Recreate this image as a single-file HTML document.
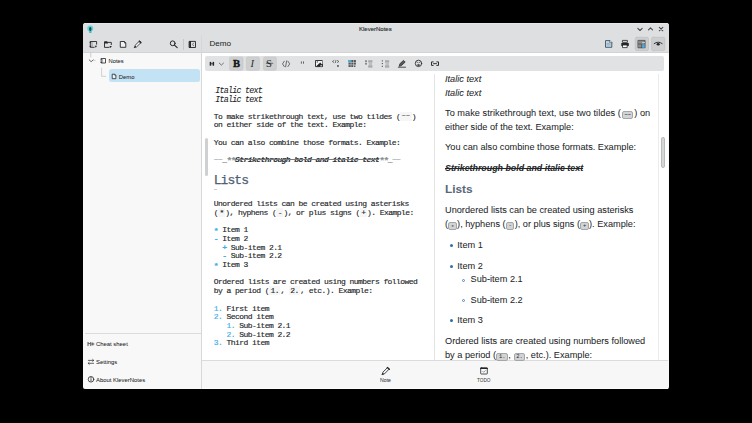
<!DOCTYPE html>
<html><head><meta charset="utf-8">
<style>
*{margin:0;padding:0;box-sizing:border-box}
html,body{width:752px;height:423px;overflow:hidden;background:#000}
body{position:relative;font-family:"Liberation Sans", sans-serif;color:#232629}
.abs{position:absolute}
.gl{position:absolute;line-height:12px;color:#232629;white-space:pre}
.ov{position:absolute;left:0;top:0}
.ml{position:absolute;white-space:pre;font-family:"Liberation Mono", monospace;font-size:8.0px;letter-spacing:-0.56px;line-height:8.7px;color:#232629;-webkit-text-stroke:0.15px currentColor}
.ml i{font-style:italic}
.ml b{font-weight:bold;-webkit-text-stroke:0;color:#2a2d30}
.ml s{text-decoration-thickness:0.45px;text-decoration-color:#7a7d80}
.ast{position:relative;top:2.2px;color:#8a8e93;font-weight:bold;font-size:9.6px;letter-spacing:-1.52px;line-height:1px}
.mk{color:#8d9196;-webkit-text-stroke:0.1px currentColor}
.bl{color:#3daee9}
.st{position:relative;top:1.2px}
.bs{font-weight:bold;-webkit-text-stroke:0.2px currentColor}
.cd{padding:0 1.5px;background:#f6f6f6}
.tl{font-size:6.6px;letter-spacing:0.28px;color:#3a3d40;position:relative;top:-0.3px}
.us{display:inline-block;width:1px;height:0.6px;background:#dfe2e5;margin:0 0.3px}
.ml i{-webkit-text-stroke:0.1px currentColor}
.it{font-size:8.3px;letter-spacing:-0.74px;position:relative;top:0.5px}
.sl{position:absolute;white-space:pre;font-family:"Liberation Sans", sans-serif;color:#232629;-webkit-text-stroke:0.04px currentColor}
.pc{display:inline-block;background:#d2d3d4;border:0.7px solid #a4a6a8;border-radius:2px;font-family:"Liberation Mono", monospace;font-size:5.4px;line-height:7.6px;height:8.2px;padding:0 1.5px;margin:0 0.4px;vertical-align:0px;color:#2a2d30;-webkit-text-stroke:0}
.dot{position:absolute;width:3px;height:3px;border-radius:50%;background:#2a6fa8}
.circ{position:absolute;width:3.1px;height:3.1px;border-radius:50%;border:0.7px solid #4f86bd}
#win{position:absolute;left:83px;top:23px;width:586px;height:366px;background:#f8f8f8;border-radius:3px 3px 2px 2px;overflow:hidden}
#hdr{position:absolute;left:0;top:0;width:586px;height:30px;background:#dedfe0;border-bottom:1px solid #d2d3d5;border-top:1px solid #e6e7e8}
</style></head><body>
<div id="win">
  <div id="hdr"></div>
  <div class="abs" style="left:119px;top:30px;width:466px;height:307px;background:#fff"></div>
  <div class="abs" style="left:119px;top:337px;width:466px;height:29px;background:#f7f7f7;border-top:1px solid #dadbdc;border-bottom:1px solid #fdfdfd"></div>
  <div class="abs" style="left:118px;top:12px;width:1px;height:354px;background:#d6d7d9"></div>
  <div class="abs" style="left:100.4px;top:16px;width:0.8px;height:11px;background:#c6c8ca"></div>
  <div class="abs" style="left:2px;top:310px;width:116px;height:1px;background:#dcdcdc"></div>
  <div class="abs" style="left:122px;top:33px;width:459px;height:14.5px;background:#e1e2e3;border-radius:2px"></div>
  <div class="abs" style="left:26px;top:46px;width:91px;height:12.8px;background:#c3e2f4;border-radius:2.5px"></div>
  <div class="abs" style="left:351px;top:51px;width:1px;height:286px;background:#e4e4e4"></div>
  <div class="abs" style="left:575px;top:51px;width:1px;height:286px;background:#ececec"></div>
  <div class="abs" style="left:122px;top:114.5px;width:3px;height:38.5px;background:#cfd0d1;border-radius:1.5px"></div>
  <div class="abs" style="left:578px;top:114px;width:3.8px;height:30.8px;background:#d5d6d7;border:0.6px solid #b8babc;border-radius:2px"></div>
</div>
<svg class="ov" width="752" height="423"><g stroke="#c4c5c7" stroke-width="0.6" fill="#cecfd0">
 <rect x="229.6" y="56.9" width="13.4" height="13.3" rx="1.5"/>
 <rect x="246.3" y="56.9" width="13.1" height="13.3" rx="1.5"/>
 <rect x="263.5" y="56.9" width="12.9" height="13.3" rx="1.5"/>
</g></svg>
<div class="ml" style="left:213.75px;top:86.42px;"><span class="us"></span><i class="it">Italic text</i><span class="us"></span></div>
<div class="ml" style="left:213.75px;top:95.12px;"><span class="us"></span><i class="it">Italic text</i><span class="us"></span></div>
<div class="ml" style="left:213.75px;top:112.52px;">To make strikethrough text, use two tildes (<span class="cd"><span class="tl">~~</span></span>)</div>
<div class="ml" style="left:213.75px;top:121.22px;">on either side of the text. Example:</div>
<div class="ml" style="left:213.75px;top:138.62px;">You can also combine those formats. Example:</div>
<div class="ml" style="left:213.75px;top:156.02px;"><span class="mk">~~_<span class="ast">**</span></span><b><i><s>Strikethrough bold and italic text</s></i></b><span class="mk"><span class="ast">**</span>_~~</span></div>
<div class="ml" style="left:213.75px;top:200.12px;">Unordered lists can be created using asterisks</div>
<div class="ml" style="left:213.75px;top:208.82px;">(<span class="cd">*</span>), hyphens (<span class="cd">-</span>), or plus signs (<span class="cd">+</span>). Example:</div>
<div class="ml" style="left:213.75px;top:226.22px;"><span class="bl bs st">*</span> Item 1</div>
<div class="ml" style="left:213.75px;top:234.92px;"><span class="bl bs">-</span> Item 2</div>
<div class="ml" style="left:213.75px;top:243.62px;">  <span class="bl bs">+</span> Sub-item 2.1</div>
<div class="ml" style="left:213.75px;top:252.32px;">  <span class="bl bs">-</span> Sub-item 2.2</div>
<div class="ml" style="left:213.75px;top:261.02px;"><span class="bl bs st">*</span> Item 3</div>
<div class="ml" style="left:213.75px;top:278.42px;">Ordered lists are created using numbers followed</div>
<div class="ml" style="left:213.75px;top:287.12px;">by a period (<span class="cd">1.</span>, <span class="cd">2.</span>, etc.). Example:</div>
<div class="ml" style="left:213.75px;top:304.52px;"><span class="bl">1.</span> First item</div>
<div class="ml" style="left:213.75px;top:313.22px;"><span class="bl">2.</span> Second item</div>
<div class="ml" style="left:213.75px;top:321.92px;">   <span class="bl">1.</span> Sub-item 2.1</div>
<div class="ml" style="left:213.75px;top:330.62px;">   <span class="bl">2.</span> Sub-item 2.2</div>
<div class="ml" style="left:213.75px;top:339.32px;"><span class="bl">3.</span> Third item</div>
<div class="ml" style="left:213.75px;top:174.50px;font-size:13px;letter-spacing:-0.95px;line-height:11px;color:#4f6074;-webkit-text-stroke:0.25px #4f6074">Lists</div>
<div style="position:absolute;left:214px;top:189px;width:3px;height:0.8px;background:#c9ccd0"></div>
<div class="sl" style="left:445px;top:72.01px;font-size:9.2px;line-height:14px;"><i>Italic text</i></div>
<div class="sl" style="left:445px;top:85.71px;font-size:9.2px;line-height:14px;"><i>Italic text</i></div>
<div class="sl" style="left:445px;top:106.01px;font-size:9.2px;line-height:14px;"><span style="letter-spacing:0.04px">To make strikethrough text, use two tildes (</span><span class="pc" style="margin:0 1.2px;width:11px">~~</span>) on</div>
<div class="sl" style="left:445px;top:119.71px;font-size:9.2px;line-height:14px;">either side of the text. Example:</div>
<div class="sl" style="left:445px;top:139.71px;font-size:9.2px;line-height:14px;">You can also combine those formats. Example:</div>
<div class="sl" style="left:445px;top:203.41px;font-size:9.2px;line-height:14px;">Unordered lists can be created using asterisks</div>
<div class="sl" style="left:445px;top:217.21px;font-size:9.2px;line-height:14px;">(<span class="pc"><span style="position:relative;top:1.3px">*</span></span>), hyphens (<span class="pc">-</span>), or plus signs (<span class="pc">+</span>). Example:</div>
<div class="sl" style="left:445px;top:334.21px;font-size:9.2px;line-height:14px;">Ordered lists are created using numbers followed</div>
<div class="sl" style="left:445px;top:348.21px;font-size:9.2px;line-height:14px;">by a period (<span class="pc">1.</span>, <span class="pc">2.</span>, etc.). Example:</div>
<div class="sl" style="left:445px;top:160.53px;font-size:8.85px;line-height:14px;"><b><i><s>Strikethrough bold and italic text</s></i></b></div>
<div class="sl" style="left:445px;top:181.01px;font-size:11.8px;line-height:16px;color:#58687a"><b>Lists</b></div>
<div class="sl" style="left:457.3px;top:237.71px;font-size:9.2px;line-height:14px;">Item 1</div>
<div class="dot" style="left:449.5px;top:243.90px"></div>
<div class="sl" style="left:457.3px;top:258.51px;font-size:9.2px;line-height:14px;">Item 2</div>
<div class="dot" style="left:449.5px;top:264.70px"></div>
<div class="sl" style="left:457.3px;top:313.01px;font-size:9.2px;line-height:14px;">Item 3</div>
<div class="dot" style="left:449.5px;top:319.20px"></div>
<div class="sl" style="left:470.6px;top:272.41px;font-size:9.2px;line-height:14px;">Sub-item 2.1</div>
<div class="circ" style="left:462.4px;top:278.50px"></div>
<div class="sl" style="left:470.6px;top:293.11px;font-size:9.2px;line-height:14px;">Sub-item 2.2</div>
<div class="circ" style="left:462.4px;top:299.20px"></div>
<div class="gl" style="left:232.9px;top:58px;font-family:&quot;Liberation Serif&quot;;font-weight:bold;font-size:10.6px;color:#111;-webkit-text-stroke:0.35px #111">B</div>
<div class="gl" style="left:250.6px;top:58px;font-family:&quot;Liberation Serif&quot;;font-style:italic;font-size:10.6px;color:#2d3033">I</div>
<div class="gl" style="left:266.1px;top:58px;font-family:&quot;Liberation Serif&quot;;font-size:10.6px">S</div>
<div class="sl" style="left:359px;top:24.82px;font-size:6.0px;line-height:8px;color:#232629;-webkit-text-stroke:0.12px #232629">KleverNotes</div>
<div class="sl" style="left:209.4px;top:39.09px;font-size:8.1px;line-height:10px;">Demo</div>
<div class="sl" style="left:108.6px;top:56.59px;font-size:5.8px;line-height:8px;">Notes</div>
<div class="sl" style="left:118.8px;top:72.56px;font-size:5.9px;line-height:8px;">Demo</div>
<div class="sl" style="left:96px;top:340.16px;font-size:5.9px;line-height:8px;">Cheat sheet</div>
<div class="sl" style="left:96px;top:357.76px;font-size:5.9px;line-height:8px;">Settings</div>
<div class="sl" style="left:96px;top:375.56px;font-size:5.9px;line-height:8px;">About KleverNotes</div>
<div class="sl" style="left:380px;top:377.00px;font-size:5.2px;line-height:7px;color:#3a3d40">Note</div>
<div class="sl" style="left:477px;top:377.17px;font-size:4.7px;line-height:7px;color:#3a3d40">TODO</div>
<svg class="ov" width="752" height="423" viewBox="0 0 752 423">
<g fill="none" stroke="#232629" stroke-width="0.9" stroke-linecap="round" stroke-linejoin="round">
 <!-- logo -->
 <circle cx="90.2" cy="28.4" r="3" fill="#62d4dc" stroke="none"/>
 <ellipse cx="90.3" cy="28.9" rx="1.2" ry="2" fill="#1d4a50" stroke="none"/>
 <rect x="89.1" y="31" width="2.4" height="2" fill="#4cbdc6" stroke="none"/>
 <!-- window buttons -->
 <polyline points="637.8,28.4 640,30.5 642.2,28.4" stroke="#454749" stroke-width="1.05"/>
 <polyline points="648.5,29.9 650.5,27.9 652.5,29.9" stroke="#454749" stroke-width="1.05"/>
 <path d="M659.3,27.4 L662.8,30.8 M662.8,27.4 L659.3,30.8" stroke="#454749" stroke-width="1.05"/>
 <!-- sidebar header icons -->
 <path d="M90.3,41.5 H96.6 V44.6 M90.3,41.5 V47.3 H94.6" stroke-width="0.9" stroke-linecap="butt"/>
 <path d="M92,42 V47" stroke="#6d7073" stroke-width="0.7"/>
 <circle cx="90.3" cy="42.2" r="0.75" fill="#232629" stroke="none"/>
 <circle cx="90.3" cy="46.5" r="0.75" fill="#232629" stroke="none"/>
 <path d="M94.7,45.7 H97 L95.85,47.7 Z" fill="#232629" stroke="none"/>
 <path d="M104.5,42.4 V47.4 H109.5 M107.5,42.4 H111.3 V45" stroke-width="0.9" stroke-linecap="butt"/>
 <path d="M104.2,41.2 H107 L108,42.2 V43.6 H104.2 Z" fill="#232629" stroke="none"/>
 <path d="M109.4,45.9 H111.8 L110.6,47.9 Z" fill="#232629" stroke="none"/>
 <path d="M120.3,41.5 H124.4 L125.8,42.9 V47.3 H120.3 Z" fill="#f1f2f3" stroke-width="0.9" stroke-linecap="butt"/>
 <path d="M124.2,41.3 L126.1,43.2 L124.2,43.2 Z" fill="#232629" stroke="none"/>
 <path d="M134.6,47.3 L135.2,45.2 L139.7,40.9 L141.2,42.4 L136.7,46.8 Z" fill="#f4f4f4" stroke-width="0.8"/>
 <path d="M139.3,41.3 L140.8,42.8" stroke-width="1.3"/>
 <path d="M134.5,47.4 L135.6,46.3" stroke-width="1"/>
 <circle cx="172.7" cy="43.3" r="2.4" stroke-width="1"/>
 <path d="M174.5,45.1 L177.2,47.6" stroke-width="1.1"/>
 <rect x="189.5" y="41.4" width="6" height="6.1" stroke-width="0.9"/>
 <rect x="189.2" y="41.1" width="1.8" height="6.7" fill="#232629" stroke="none"/>
 <polyline points="193.6,43 192.6,44.4 193.6,45.8" stroke-width="0.6"/>
 <!-- tree -->
 <path d="M90.8,52.5 V57" stroke="#c5c7c9" stroke-width="0.9"/>
 <polyline points="89.2,59.9 91.2,61.7 93.2,59.9" stroke="#3c3f42" stroke-width="0.8"/>
 <path d="M93.6,60.6 H95.4" stroke="#c5c7c9" stroke-width="0.7"/>
 <path d="M101.2,58.5 H105.5 V63 H101.2 Z" fill="#fbfbfb" stroke-width="0.8" stroke-linecap="butt"/>
 <path d="M102.6,58.8 V62.7" stroke="#6d7073" stroke-width="0.6"/>
 <circle cx="101.2" cy="59.1" r="0.6" fill="#232629" stroke="none"/><circle cx="101.2" cy="62.4" r="0.6" fill="#232629" stroke="none"/>
 <path d="M101.6,68 V76.3 H105.8" stroke="#c5c7c9" stroke-width="0.8"/>
 <path d="M112.2,74.2 H114.8 L115.9,75.3 V78.7 H112.2 Z" fill="#e6f3fb" stroke-width="0.8" stroke-linecap="butt"/>
 <path d="M114.6,74 L116.1,75.5 L114.6,75.5 Z" fill="#232629" stroke="none"/>
 <!-- header right icons -->
 <path d="M605.5,40.6 H609.9 L611.8,42.5 V47.3 H605.5 Z" fill="#b3dcf3" stroke="#3b3e41" stroke-width="0.8" stroke-linecap="butt"/>
 <path d="M609.7,40.5 V42.7 H611.9" fill="#eef7fc" stroke="#3b3e41" stroke-width="0.6"/>
 <path d="M607,43.6 H609 M607,44.9 H610.3" stroke="#7a7d80" stroke-width="0.5"/>
 <rect x="622.8" y="40.4" width="4.6" height="2" stroke-width="0.8"/>
 <path d="M621.3,43 H628.8 V46 H621.3 Z" fill="#232629" stroke="none"/>
 <rect x="622.9" y="45" width="4.3" height="2.6" fill="#fff" stroke="#232629" stroke-width="0.8"/>
 <!-- pressed buttons -->
 <rect x="635.3" y="37.3" width="13.2" height="13.3" rx="1.5" fill="#cdcecf" stroke="#bfc0c2" stroke-width="0.7"/>
 <rect x="651.6" y="37.3" width="13.2" height="13.3" rx="1.5" fill="#cdcecf" stroke="#bfc0c2" stroke-width="0.7"/>
 <rect x="638.3" y="40.4" width="6.8" height="7.4" fill="#8a8c8e" stroke="#3b3e41" stroke-width="0.7"/>
 <path d="M638.3,44 H641.7 V47.8" stroke="#3b3e41" stroke-width="0.6"/>
 <path d="M642.5,42.5 H644.5" stroke="#e8e8e8" stroke-width="0.7"/>
 <path d="M642.3,44.8 H644.6 V47.8 H642.3 Z" fill="#3daee9" stroke="none"/>
 <path d="M654.2,43.6 Q658.2,40.6 662.2,43.6" stroke-width="0.9"/>
 <ellipse cx="658.2" cy="44.2" rx="1.6" ry="1.3" fill="#232629" stroke="none"/>
 <!-- editor toolbar buttons -->
 <path d="M266.3,63.3 H272.8" stroke-width="0.6"/>
 <rect x="209.7" y="61.9" width="1.5" height="3.8" fill="#232629" stroke="none"/><rect x="212.6" y="61.9" width="1.5" height="3.8" fill="#232629" stroke="none"/><rect x="211" y="63.4" width="1.8" height="0.8" fill="#232629" stroke="none"/>
 <polyline points="219.3,63.1 221.4,65.1 223.5,63.1" stroke="#505356" stroke-width="0.8"/>
 <path d="M284.3,61.2 L282.5,63.9 L284.3,66.6 M287.9,61.2 L289.7,63.9 L287.9,66.6 M286.6,61 L285.6,66.8" stroke="#3f4245" stroke-width="0.75"/>
 <path d="M301.4,61.8 V63.3 M303.5,61.8 V63.3" stroke="#55585b" stroke-width="0.9"/>
 <rect x="315.9" y="60.5" width="6.6" height="6.1" fill="#f3f3f3" stroke-width="0.9"/>
 <path d="M322.5,60.5 V63.6" stroke="#8a8c8e" stroke-width="0.9"/>
 <path d="M315.9,66.6 L320.2,62.6 L322.5,64.9 V66.6 Z" fill="#232629" stroke="none"/>
 <circle cx="321.1" cy="65.7" r="0.75" fill="#f3f3f3" stroke="none"/>
 <circle cx="317.3" cy="61.9" r="0.6" fill="#232629" stroke="none"/>
 <path d="M333.9,60.5 L332.4,61.5 L333.9,62.5 M337.4,60.5 L338.9,61.5 L337.4,62.5 M335.9,60.4 L335.4,62.6" stroke="#3f4245" stroke-width="0.7"/>
 <rect x="337.2" y="65.2" width="1.5" height="1.5" fill="#232629" stroke="none"/>
 <rect x="348.5" y="60" width="7.4" height="7" fill="#55585b" stroke="none"/>
 <path d="M348.5,62.5 H356 M348.5,64.8 H356 M351,60 V67 M353.5,60 V67" stroke="#e1e2e3" stroke-width="0.5"/>
 <rect x="348.5" y="60" width="2.4" height="2.4" fill="#3daee9" stroke="none"/>
 <rect x="353.6" y="64.9" width="2.4" height="2.2" fill="#e1e2e3" stroke="none"/>
 <rect x="354.3" y="65.4" width="1" height="1.6" fill="#232629" stroke="none"/>
 <path d="M366,60.3 V62.2 M366,63 V64.6" stroke-width="0.95" stroke-linecap="butt"/>
 <path d="M368.2,60.9 H372.4 M368.2,62 H372.4 M368.8,64 H372 M368.2,65.9 H372.4 M368.2,67 H372.4" stroke="#505356" stroke-width="0.5" stroke-linecap="butt"/>
 <path d="M382.3,60.4 V61.4 M382.3,63.1 V64.1 M382.3,65.8 V66.8" stroke-width="0.95" stroke-linecap="butt"/>
 <path d="M385,60.9 H389.2 M385,62 H389.2 M385.6,64 H388.8 M385,65.9 H389.2 M385,67 H389.2" stroke="#505356" stroke-width="0.5" stroke-linecap="butt"/>
 <path d="M398.3,67.2 H405.5" stroke-width="0.8"/>
 <path d="M399.3,65.9 L399.9,63.7 L403.5,60.4 L405.2,62.1 L401.6,65.4 Z" fill="#55585b" stroke="#232629" stroke-width="0.7"/>
 <circle cx="418.5" cy="63.4" r="3.2" stroke-width="0.85"/>
 <path d="M416.9,62.1 L417.9,62.6 M420.1,62.1 L419.1,62.6" stroke-width="0.6"/>
 <path d="M417.4,64.3 H419.6 V65.8 H417.4 Z" fill="#232629" stroke="none"/>
 <path d="M433.6,61.9 H431.5 V65.4 H433.6 M436.4,61.9 H438.5 V65.4 H436.4 M433.2,63.65 H436.8" stroke-width="0.95" stroke-linecap="butt" stroke-linejoin="miter"/>
 <!-- sidebar bottom icons -->
 <path d="M88,345.7 V342.4 L89.4,344.1 L90.8,342.4 V345.7" stroke="#2a2d30" stroke-width="0.8"/>
 <path d="M92.8,342.8 V345.2 M91.6,344 H94" stroke="#2a2d30" stroke-width="0.7"/>
 <path d="M88.3,360.4 H93.6 M88.3,363.3 H93.6" stroke-width="0.7"/>
 <path d="M92.6,359.3 L93.8,360.4 L92.6,361.5 M89.3,362.2 L88.1,363.3 L89.3,364.4" stroke-width="0.6"/>
 <circle cx="91" cy="379.3" r="2.8" stroke-width="0.8"/>
 <path d="M91,378.6 V381 M91,377.4 V377.6" stroke-width="0.8"/>
 <!-- bottom bar icons -->
 <path d="M382.3,374.3 L382.9,372.2 L387.5,367.6 L389.1,369.2 L384.5,373.8 Z" fill="#f7f7f7" stroke-width="0.85"/>
 <path d="M387.4,367.4 L389.3,369.3" stroke-width="1.4"/>
 <path d="M382.2,374.4 L383.3,373.3" stroke-width="1"/>
 <rect x="480.7" y="367.8" width="6.6" height="6.2" rx="0.5" fill="#fafafa" stroke-width="0.8"/>
 <path d="M480.7,368.4 H487.3" stroke-width="1.3"/>
 <path d="M482.8,371.4 L483.7,372.3 L485.4,370.5" stroke="#55585b" stroke-width="0.6"/>
</g>
</svg>
</body></html>
